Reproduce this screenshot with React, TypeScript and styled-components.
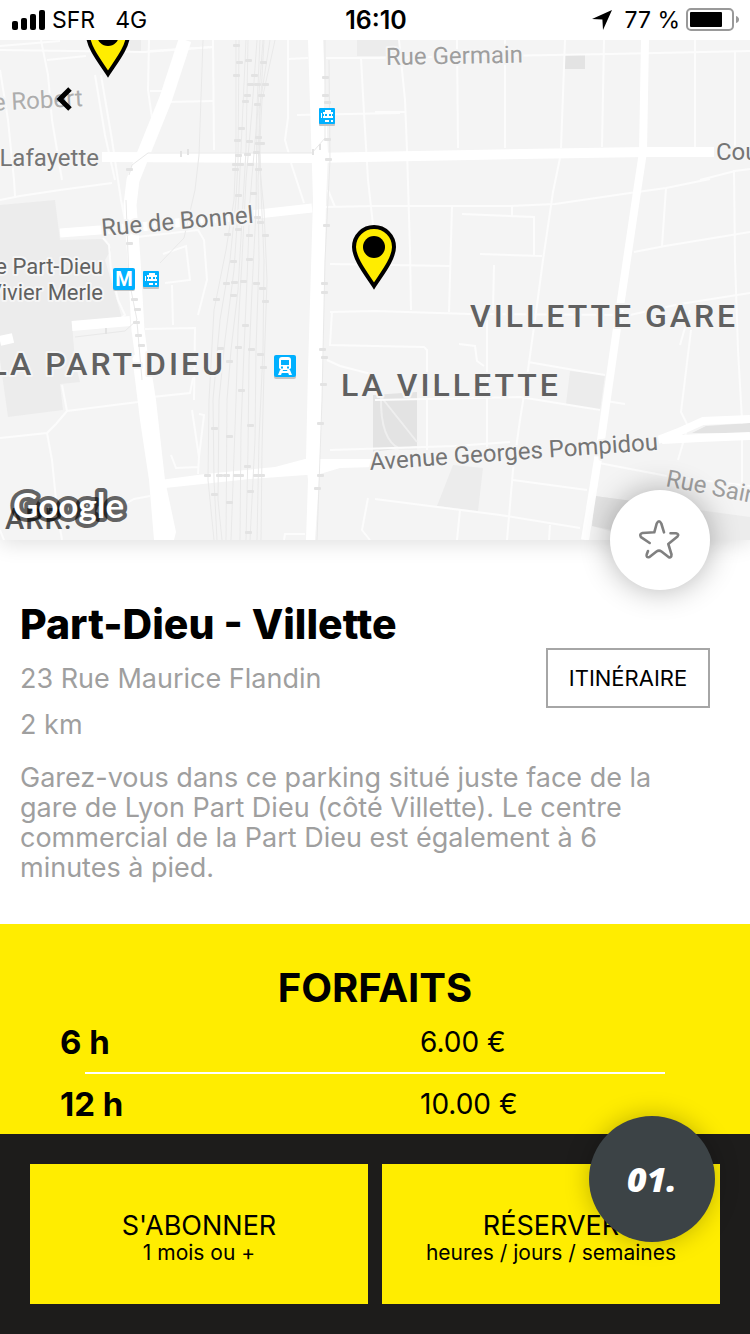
import React from "react";
import styled, { createGlobalStyle } from "styled-components";

const yellow = "#ffed00";
const grey = "#9f9f9f";

const GlobalStyle = createGlobalStyle`
  *, *::before, *::after { box-sizing: border-box; }
  body { margin: 0; background: #fff; color: #000; font-family: Inter, "Liberation Sans", sans-serif; }
  h1, h2, p { margin: 0; }
  button { font: inherit; color: inherit; border: 0; padding: 0; cursor: pointer; }
`;

const Page = styled.div`
  display: flex;
  flex-direction: column;
  min-height: 100vh;
`;

const StatusBar = styled.header`
  position: relative;
  z-index: 1;
  display: grid;
  grid-template-columns: 1fr auto 1fr;
  align-items: center;
  height: 40px;
  padding: 0 10px 0 12px;
  background: #fff;
  font-size: 23px;
  line-height: 40px;
`;

const StatusGroup = styled.div<{ $end?: boolean }>`
  display: flex;
  align-items: center;
  gap: 6px;
  justify-content: ${(p) => (p.$end ? "flex-end" : "flex-start")};
`;

const Network = styled.span`
  margin-left: 14px;
`;

const Charge = styled.span`
  margin-left: 6px;
`;

const Clock = styled.time`
  font-size: 25px;
  font-weight: 600;
`;

const MapArea = styled.section`
  position: relative;
  height: 500px;
  background: #f4f4f4;
  box-shadow: 0 4px 20px rgba(0, 0, 0, 0.12);
`;

const MapCanvas = styled.svg`
  display: block;
  width: 100%;
  height: 100%;
  font-family: Roboto, sans-serif;
`;

const BackButton = styled.button`
  position: absolute;
  left: 44px;
  top: 39px;
  width: 40px;
  height: 40px;
  display: grid;
  place-items: center;
  background: none;
`;

const FavouriteButton = styled.button`
  position: absolute;
  right: 40px;
  bottom: -50px;
  width: 100px;
  height: 100px;
  display: grid;
  place-items: center;
  border-radius: 50%;
  background: #fff;
  box-shadow: 0 0 30px rgba(0, 0, 0, 0.3);
`;

const Details = styled.section`
  padding: 60px 40px 41px 20px;
`;

const Title = styled.h1`
  font-size: 41px;
  font-weight: 800;
  line-height: 48px;
`;

const Summary = styled.div`
  display: flex;
  align-items: flex-start;
  justify-content: space-between;
`;

const Facts = styled.div`
  padding-top: 8px;
`;

const Fact = styled.p`
  font-size: 27px;
  line-height: 46px;
  color: ${grey};
`;

const RouteButton = styled.button`
  width: 164px;
  height: 60px;
  border: 2px solid #a6a6a6;
  background: #fff;
  font-size: 22px;
`;

const Description = styled.p`
  max-width: 650px;
  margin-top: 15px;
  font-size: 27px;
  line-height: 30px;
  color: ${grey};
`;

const Plans = styled.section`
  flex: 1;
  padding: 40px 60px 0;
  background: ${yellow};
`;

const PlansTitle = styled.h2`
  font-size: 40px;
  font-weight: 700;
  line-height: 48px;
  text-align: center;
`;

const PriceTable = styled.table`
  display: block;
  width: 100%;

  tbody { display: block; }
`;

const PriceRow = styled.tr`
  display: grid;
  grid-template-columns: 4fr 3fr;

  & + &::before {
    content: "";
    grid-column: 1 / -1;
    height: 2px;
    margin: 0 25px;
    background: #fff;
  }
`;

const Duration = styled.th`
  padding: 0;
  font-size: 33px;
  font-weight: 700;
  line-height: 60px;
  text-align: left;
`;

const Price = styled.td`
  padding: 0;
  font-size: 28px;
  line-height: 60px;
`;

const Actions = styled.footer`
  position: relative;
  display: grid;
  grid-template-columns: 1fr 1fr;
  gap: 14px;
  padding: 30px;
  background: #1d1c1b;
`;

const ActionButton = styled.button`
  display: flex;
  flex-direction: column;
  align-items: center;
  justify-content: center;
  height: 140px;
  padding-top: 8px;
  background: ${yellow};
`;

const ActionName = styled.span`
  font-size: 27px;
  line-height: 30px;
`;

const ActionHint = styled.span`
  font-size: 21px;
  line-height: 24px;
`;

const StepBadge = styled.button`
  position: absolute;
  right: 35px;
  top: -18px;
  width: 126px;
  height: 126px;
  border-radius: 50%;
  background: #3c4346;
  color: #fff;
  box-shadow: 0 0 24px rgba(0, 0, 0, 0.25);
  font-family: "Open Sans", sans-serif;
  font-size: 34px;
  font-weight: 800;
  font-style: italic;
`;

const minorRoads = [
  "M0 46 L60 41", "M0 50 L145 52 L213 47", "M47 60 L86 56 M150 51 L213 47",
  "M41 40 L48 75 L52 120 L62 180", "M0 70 L8 120 L14 180 L15 196", "M95 75 L105 135 L115 180",
  "M101 75 L112 140 L121 200 L126 225", "M149 40 L148 90 L152 118", "M150 91 L163 91 M167 102 L213 101",
  "M213 40 L214 150", "M288 40 L288 118 L285 140 L290 158", "M288 59 L308 58 M297 115 L400 113",
  "M326 58 L375 58 L490 56 L610 54 L750 51", "M361 58 L364 113 L368 180 L373 225",
  "M399 40 L405 100 L407 150 L410 250 L411 310", "M457 40 L458 148", "M505 40 L505 148",
  "M565 40 L561 148", "M604 40 L602 147", "M695 40 L695 147", "M735 52 L735 147", "M375 112 L405 112",
  "M560 158 L553 192 L543 260 L537 305 L528 370 L520 420 L513 470 L507 540",
  "M700 180 L735 171 L750 169", "M734 170 L735 260 L738 350 L742 420 L742 500",
  "M0 200 L20 196 L60 190 L112 183", "M325 207 L375 206 L450 206 L510 206 L555 204 L630 193 L666 188 L710 179",
  "M452 206 L449 312", "M512 206 L512 216 M462 214 L534 217 L534 255 M480 254 L542 256",
  "M494 265 L493 310", "M666 188 L662 246", "M634 252 L665 246 L750 232", "M330 264 L450 266",
  "M330 312 L375 311 L470 314 L630 315 L680 304 L750 293", "M487 320 L487 460",
  "M459 344 L475 346 L477 361 L484 366", "M528 362 L580 371 L605 375", "M375 346 L424 347 L427 350 L427 450",
  "M691 330 L681 412 L688 426 L678 460", "M332 311 L330 345 L375 346", "M327 360 L340 366 L375 375",
  "M103 238 L109 245 L111 270 L118 300 L125 315 L115 323", "M137 237 L198 230 L204 240 L207 280 L198 315",
  "M163 254 L186 246 L190 280 L165 283", "M172 285 L173 325 M145 329 L195 328 L194 400",
  "M152 397 L190 393 L193 378", "M192 410 L199 457 L198 474 M171 455 L176 468 L198 467 M199 457 L204 415 L199 414",
  "M0 438 L47 433 L56 424 L67 411 L138 402", "M62 385 L67 411", "M47 433 L52 460 L57 510 L62 540",
  "M120 507 L134 499 L150 496", "M0 530 L4 540", "M375 400 L520 397 L600 410", "M513 480 L587 490",
  "M375 499 L500 515 L580 528", "M460 510 L457 540 M550 525 L549 540", "M599 463 L667 476 L750 486",
  "M606 401 L625 404", "M330 450 L455 446 L510 442", "M368 498 L362 530 L370 540 M284 540 L285 534 L305 534",
  "M291 163 L304 203", "M328 190 L335 207", "M680 345 L690 310",
];

const railLines = [
  "M236 40 L236 150 L234 200 L226 250 L214 310 L209 400 L208 480 L214 540",
  "M239 40 L238 160 L236 200 L230 260 L220 320 L213 400 L214 480 L217 540",
  "M246 40 L241 150 L238 210 L234 270 L225 340 L219 400 L218 500 L222 540",
  "M248 40 L246 150 L242 220 L238 290 L231 350 L227 400 L226 540",
  "M257 40 L252 110 L246 180 L242 260 L238 330 L236 400 L231 540",
  "M260 40 L256 130 L250 200 L247 280 L244 350 L241 430 L240 540",
  "M263 40 L257 120 L256 210 L252 290 L249 360 L248 450 L246 540",
  "M275 40 L262 100 L258 180 L259 260 L256 350 L255 440 L250 540",
  "M270 40 L259 110 L261 190 L264 260 L263 350 L259 440 L257 540",
  "M264 40 L258 150 L264 210 L267 280 L264 370 L262 450 L261 540",
];

const railMarks: Array<[number, number]> = [
  [236, 45], [239, 62], [248, 60], [263, 62], [236, 75], [254, 75], [250, 84], [257, 84], [265, 84],
  [247, 95], [261, 95], [245, 101], [257, 104], [241, 128], [237, 140], [249, 141], [258, 137], [258, 143],
  [261, 143], [238, 155], [256, 152], [247, 154], [235, 164], [250, 164], [240, 164], [235, 169], [258, 169],
  [238, 195], [253, 193], [257, 217], [260, 222], [227, 234], [238, 229], [249, 235], [265, 235],
  [233, 261], [249, 259], [226, 283], [234, 282], [243, 281], [256, 283], [262, 288], [216, 299], [233, 295],
  [265, 301], [245, 325], [220, 348], [238, 347], [251, 349], [260, 354], [229, 361], [263, 367], [241, 390],
  [214, 428], [229, 436], [250, 425], [247, 466], [207, 475], [219, 475], [226, 475], [236, 475], [240, 475],
  [256, 475], [261, 475], [214, 494], [229, 502], [250, 491], [248, 532], [325, 77], [325, 95], [327, 102],
  [327, 139], [328, 159], [326, 225], [324, 283], [324, 292], [322, 349], [324, 357], [323, 384], [320, 423],
  [320, 475], [317, 488], [129, 243], [134, 299], [137, 309], [136, 322], [138, 335], [141, 345], [129, 169],
];

const TramIcon = ({ x, y }: { x: number; y: number }) => (
  <g transform={`translate(${x} ${y})`}>
    <rect y="1" width="16" height="17" rx="1" fill="#c4c4c4" />
    <rect width="16" height="16" rx="1" fill="#00b0ff" />
    <path d="M6 2h6v2h2v6H4V4h2z M2 5h1v5H2z M6 12h4v2H6z M12 12h2v2h-2z" fill="#fff" />
    <path d="M6 6h2v2H6z M10 6h2v2h-2z M4 6h1v2H4z M13 6h1v2h-1z" fill="#00b0ff" />
  </g>
);

const Pin = ({ x, y }: { x: number; y: number }) => (
  <g transform={`translate(${x} ${y})`}>
    <path
      d="M0 28 C-7 17 -20 1 -20 -11 A20 20 0 0 1 20 -11 C20 1 7 17 0 28Z"
      fill={yellow}
      stroke="#000"
      strokeWidth="4"
    />
    <circle cy="-11" r="11" fill="#000" />
  </g>
);

const CityMap = () => (
  <MapCanvas viewBox="0 40 750 500" preserveAspectRatio="xMidYMid slice" role="img" aria-label="Plan du quartier">
    <g fill="#ececec">
      <path d="M0 205 L55 200 L60 240 L105 239 L111 250 L105 260 L122 318 L72 323 L75 362 L80 382 L60 384 L63 410 L8 417 L0 360Z" />
      <path d="M130 40 h11 v11 h-11z M357 40 h42 v16 h-42z" />
      <path d="M570 371 L605 375 L600 411 L566 404Z M453 465 L483 468 L478 511 L437 506Z" />
      <path d="M595 496 L750 517 V540 H640 L592 526Z" />
    </g>
    <g fill="#e3e3e3">
      <path d="M373 395 L417 392 V446 L373 452Z M565 55 h20 v14 h-20z M595 496 L640 502 L636 535 L592 526Z" />
    </g>
    <path d="M381 396 Q380 440 400 449 H417 M382 398 L417 442" fill="none" stroke="#efefef" strokeWidth="2" />
    <g fill="none" stroke="#fcfcfc" strokeWidth="2">
      {minorRoads.map((d) => <path key={d} d={d} />)}
    </g>
    <g fill="none" stroke="#fff" strokeLinejoin="round">
      <path d="M185 40 L166 98 L143 155 L133 180 L130 205 L134 260 L138 330 L142 360" strokeWidth="13" />
      <path d="M102 157 L310 158 L470 155 L645 152 L714 152" strokeWidth="10" />
      <path d="M60 233 L140 227 L312 208" strokeWidth="9" />
      <path d="M0 341 L13 338 M72 326 L130 321" strokeWidth="10" />
      <path d="M645 40 L643 152 L638 185 L621 300 L601 440 L585 540" strokeWidth="8" />
    </g>
    <g fill="#fff">
      <path d="M308 40 H323 L328 155 L326 200 L323 370 L319 480 L315 540 H306 L308 480 L306 460 L308 370 L313 200Z" />
      <path d="M132 355 H149 L156 400 L165 480 L176 532 L174 540 H154 L149 480 L140 420Z" />
      <path d="M160 480 L205 474 L275 467 L305 459 L375 459 V467 L340 468 L320 474 L250 479 L165 488Z" />
    </g>
    <path d="M692 433 L706 426 L750 423 V433Z" fill="#e3e3e3" />
    <path d="M658 440 Q680 432 703 421 L750 419 M662 440 L700 438 L750 436" fill="none" stroke="#fff" strokeWidth="8" />
    <g fill="none" stroke="#e9e9e9">
      {railLines.map((d) => <path key={d} d={d} />)}
      <path d="M203 40 L199 155 L195 190 L184 238 L160 263 M129 175 L132 165 L148 153 L312 153 L325 138 L325 40 M329 60 L330 160 L325 260 L322 400 L317 540" />
      <path d="M126 200 L129 280 L137 320 L125 331 L75 337 M137 322 L142 380" />
    </g>
    <g fill="#e3e3e3">
      {railMarks.map(([x, y], i) => <rect key={i} x={x - 3} y={y - 1} width="7" height="3" rx="1" />)}
      <path d="M180 151h2v6h-2z M187 149h2v6h-2z M312 149h2v6h-2z M319 144h2v6h-2z M105 328h2v6h-2z" />
    </g>

    <g fontSize="24" fill="#757575" stroke="#f5f5f5" strokeWidth="4" strokeLinejoin="round" paintOrder="stroke">
      <text x="386" y="65" fill="#9e9e9e" transform="rotate(-1 386 65)">Rue Germain</text>
      <text x="83" y="106" textAnchor="end" fill="#adadad" transform="rotate(-3 83 106)">Rue Robert</text>
      <text x="99" y="166" textAnchor="end">Rue Lafayette</text>
      <text x="716" y="160">Cours Lafayette</text>
      <text x="102" y="236" transform="rotate(-5 102 236)">Rue de Bonnel</text>
      <text x="370" y="470" transform="rotate(-4 370 470)">Avenue Georges Pompidou</text>
      <text x="665" y="486" fill="#9e9e9e" transform="rotate(11 665 486)">Rue Saint</text>
    </g>
    <g fontSize="22" fill="#616161" stroke="#f5f5f5" strokeWidth="4" strokeLinejoin="round" paintOrder="stroke">
      <text x="103" y="274" textAnchor="end">Gare Part-Dieu</text>
      <text x="103" y="300" textAnchor="end">Vivier Merle</text>
    </g>
    <g fontSize="32" fontWeight="500" letterSpacing="3" fill="#616161" stroke="#f5f5f5" strokeWidth="4" strokeLinejoin="round" paintOrder="stroke">
      <text x="470" y="327">VILLETTE GARE</text>
      <text x="341" y="396">LA VILLETTE</text>
      <text x="226" y="375" textAnchor="end">LA PART-DIEU</text>
    </g>
    <text x="5" y="529" fontSize="29" fontWeight="500" letterSpacing="1" fill="#555">ARR.</text>

    <rect x="113" y="269" width="22" height="22" rx="2" fill="#c4c4c4" />
    <rect x="113" y="268" width="22" height="22" rx="2" fill="#00b0ff" />
    <text x="124" y="286" textAnchor="middle" fontSize="20" fontWeight="700" fill="#fff">M</text>
    <TramIcon x={143} y={271} />
    <TramIcon x={319} y={108} />
    <g transform="translate(274 355)">
      <rect y="1" width="22" height="23" rx="2" fill="#c4c4c4" />
      <rect width="22" height="22" rx="2" fill="#00b0ff" />
      <path d="M5 5 Q5 2 8 2 H14 Q17 2 17 5 V13 L15 15 H7 L5 13Z M6 15h3l-2 5H4z M13 15h3l2 5h-3z M7 16h8v2H7z" fill="#fff" />
      <path d="M7 5h8v5H7z M7 11.500h2v2H7z M13 11.500h2v2h-2z" fill="#00b0ff" />
    </g>

    <Pin x={108} y={46} />
    <Pin x={374} y={258} />

    <text x="13" y="518" fontFamily="Lato, sans-serif" fontSize="35" fontWeight="700" fill="#fff" stroke="#000" strokeOpacity="0.6" strokeWidth="8" strokeLinejoin="round" paintOrder="stroke">Google</text>
  </MapCanvas>
);

const SignalIcon = () => (
  <svg width="34" height="20" viewBox="0 0 34 20" aria-hidden="true">
    <rect y="11" width="6" height="9" rx="2" />
    <rect x="9" y="8" width="6" height="12" rx="2" />
    <rect x="18" y="4" width="6" height="16" rx="2" />
    <rect x="27" y="0" width="6" height="20" rx="2" />
  </svg>
);

const LocationIcon = () => (
  <svg width="20" height="20" viewBox="0 0 20 20" aria-hidden="true">
    <path d="M20 0 L11 20 L10.400 9.600 L0 9Z" />
  </svg>
);

const BatteryIcon = () => (
  <svg width="54" height="24" viewBox="0 0 54 24" aria-hidden="true">
    <rect x="1" y="1" width="46" height="21" rx="4" fill="none" stroke="#999" strokeWidth="2" />
    <rect x="4" y="4" width="32" height="15" rx="1" />
    <path d="M50 8 Q53 9 53 11.500 Q53 14 50 15Z" fill="#999" />
  </svg>
);

const plans = [
  { duration: "6 h", price: "6.00 €" },
  { duration: "12 h", price: "10.00 €" },
];

const actions = [
  { name: "S'ABONNER", hint: "1 mois ou +" },
  { name: "RÉSERVER", hint: "heures / jours / semaines" },
];

export default function App() {
  return (
    <Page>
      <GlobalStyle />
      <StatusBar>
        <StatusGroup>
          <SignalIcon />
          <span>SFR</span>
          <Network>4G</Network>
        </StatusGroup>
        <Clock>16:10</Clock>
        <StatusGroup $end>
          <LocationIcon />
          <Charge>77 %</Charge>
          <BatteryIcon />
        </StatusGroup>
      </StatusBar>

      <MapArea>
        <CityMap />
        <BackButton aria-label="Retour">
          <svg width="16" height="26" viewBox="0 0 16 26" fill="none" stroke="#000" strokeWidth="5">
            <path d="M14 3 L4 13 L14 23" />
          </svg>
        </BackButton>
        <FavouriteButton aria-label="Ajouter aux favoris">
          <svg width="44" height="44" viewBox="638 518 44 44" fill="none" stroke="#808080" strokeWidth="2.600" strokeLinecap="round" strokeLinejoin="round">
            <path d="M664 532.300 L661.300 523.500 Q659 518.900 656.700 523.500 L654.300 532.300 L642.500 533 Q639 534 641 537.200 L649.700 543" />
            <path d="M670.500 533.300 L676 533.300 Q679.500 534 677.500 536.500 L668.300 544 L671.500 554.500 Q671.500 558.500 668.500 557 L661.500 551.500 Q659 549.800 656.500 551.500 L649.500 557 Q645.800 558 646.700 554.500 L648 551" />
          </svg>
        </FavouriteButton>
      </MapArea>

      <Details>
        <Title>Part-Dieu - Villette</Title>
        <Summary>
          <Facts>
            <Fact>23 Rue Maurice Flandin</Fact>
            <Fact>2 km</Fact>
          </Facts>
          <RouteButton>ITINÉRAIRE</RouteButton>
        </Summary>
        <Description>
          Garez-vous dans ce parking situé juste face de la gare de Lyon Part Dieu (côté Villette). Le centre
          commercial de la Part Dieu est également à 6 minutes à pied.
        </Description>
      </Details>

      <Plans>
        <PlansTitle>FORFAITS</PlansTitle>
        <PriceTable>
          <tbody>
            {plans.map((plan) => (
              <PriceRow key={plan.duration}>
                <Duration scope="row">{plan.duration}</Duration>
                <Price>{plan.price}</Price>
              </PriceRow>
            ))}
          </tbody>
        </PriceTable>
      </Plans>

      <Actions>
        {actions.map((action) => (
          <ActionButton key={action.name}>
            <ActionName>{action.name}</ActionName>
            <ActionHint>{action.hint}</ActionHint>
          </ActionButton>
        ))}
        <StepBadge>01.</StepBadge>
      </Actions>
    </Page>
  );
}
